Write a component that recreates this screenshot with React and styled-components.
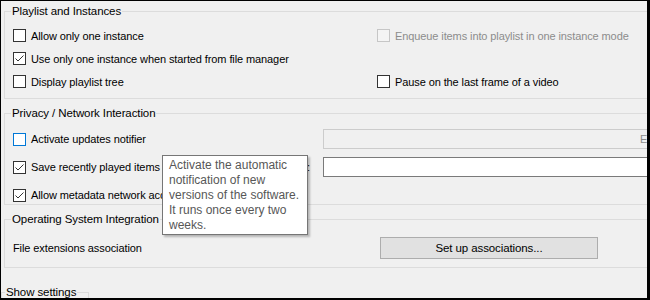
import React from 'react';
import styled, { createGlobalStyle } from 'styled-components';

const GlobalStyle = createGlobalStyle`
    html, body {
        margin: 0;
        padding: 0;
        background: #f0f0f0;
    }
    * {
        box-sizing: border-box;
    }
`

const Frame = styled.div`
    position: relative;
    width: 650px;
    height: 300px;
    background: #f0f0f0;
    border-style: solid;
    border-color: #000;
    border-width: 1px 3px 2px 1px;
    overflow: hidden;
    display: flex;
    flex-direction: column;
    font-family: 'Liberation Sans', Arial, sans-serif;
    font-size: 11px;
    letter-spacing: -0.1px;
    color: #000;
`

const Group = styled.fieldset`
    flex-shrink: 0;
    width: ${p => p.$width || 700}px;
    margin: ${p => p.$top}px 0 0 ${p => p.$left ?? 3}px;
    padding: ${p => p.$padTop}px 0 ${p => p.$padBottom}px 8px;
    border: 1px solid #dcdcdc;
    min-width: 0;
`

const Legend = styled.legend`
    padding: 0 1px;
    margin-left: ${p => p.$offset ?? -2}px;
    font-size: 11.5px;
    line-height: 14px;
    height: 14px;
`

const Grid = styled.div`
    display: grid;
    grid-template-columns: ${p => p.$col}px 1fr;
    grid-auto-rows: ${p => p.$row}px;
    row-gap: ${p => p.$gap || 0}px;
    align-items: center;
`

const Option = styled.label`
    display: flex;
    align-items: center;
    gap: 5px;
    white-space: nowrap;
    color: ${p => (p.$disabled ? '#8c8c8c' : '#000')};
`

const Box = styled.span`
    flex-shrink: 0;
    width: 13px;
    height: 13px;
    display: flex;
    align-items: center;
    justify-content: center;
    background: ${p => (p.$disabled ? '#f4f4f4' : '#fff')};
    border: 1px solid ${p => (p.$disabled ? '#c6c6c6' : p.$focus ? '#0078d7' : '#333')};
`

const Caption = styled.span`
    white-space: nowrap;
`

const SideLabel = styled.span`
    margin-left: auto;
    padding-right: 13px;
    white-space: nowrap;
`

const Field = styled.div`
    height: 20px;
    border: 1px solid ${p => (p.$disabled ? '#cccccc' : '#7a7a7a')};
    background: ${p => (p.$disabled ? '#f0f0f0' : '#fff')};
    color: #8c8c8c;
    display: flex;
    align-items: center;
    padding-left: ${p => (p.$disabled ? 316 : 3)}px;
    white-space: nowrap;
`

const Button = styled.button`
    width: 218px;
    height: 22px;
    padding: 0;
    background: #e1e1e1;
    border: 1px solid #adadad;
    font-family: inherit;
    font-size: 11.5px;
    letter-spacing: -0.1px;
    color: #000;
`

const Tooltip = styled.div`
    position: absolute;
    left: 161px;
    top: 154px;
    width: 146px;
    height: 80px;
    padding: 2px 0 0 6px;
    background: #fff;
    border: 1px solid #767676;
    box-shadow: 2px 2px 2px rgba(0, 0, 0, 0.25);
    font-family: 'Liberation Sans', Arial, sans-serif;
    font-size: 12px;
    letter-spacing: 0;
    line-height: 15px;
    color: #575757;
`

function CheckBox({ checked, disabled, focus, children }) {
    return (
        <Option $disabled={disabled}>
            <Box $disabled={disabled} $focus={focus}>
                {checked && (
                    <svg width="11" height="11" viewBox="0 0 11 11">
                        <polyline points="1.5,5.5 4,8 9.5,2.5" fill="none" stroke="#333" strokeWidth="1" />
                    </svg>
                )}
            </Box>
            {children}
        </Option>
    )
}

export default function App() {
    return (
        <>
            <GlobalStyle />
            <Frame>
                <Group $top={3} $padTop={6} $padBottom={5}>
                    <Legend>Playlist and Instances</Legend>
                    <Grid $col={364} $row={23}>
                        <CheckBox>Allow only one instance</CheckBox>
                        <CheckBox disabled>Enqueue items into playlist in one instance mode</CheckBox>
                        <CheckBox checked>Use only one instance when started from file manager</CheckBox>
                        <span />
                        <CheckBox>Display playlist tree</CheckBox>
                        <CheckBox>Pause on the last frame of a video</CheckBox>
                    </Grid>
                </Group>

                <Group $top={7} $padTop={10} $padBottom={0}>
                    <Legend>Privacy / Network Interaction</Legend>
                    <Grid $col={310} $row={18} $gap={10}>
                        <CheckBox focus>Activate updates notifier</CheckBox>
                        <Field $disabled>Every 3 days</Field>
                        <Option as="div">
                            <CheckBox checked>Save recently played items</CheckBox>
                            <SideLabel>Filter:</SideLabel>
                        </Option>
                        <Field />
                        <CheckBox checked>Allow metadata network access</CheckBox>
                        <span />
                    </Grid>
                </Group>

                <Group $top={7} $padTop={11} $padBottom={8}>
                    <Legend>Operating System Integration</Legend>
                    <Grid $col={367} $row={22}>
                        <Caption>File extensions association</Caption>
                        <Button>Set up associations...</Button>
                    </Grid>
                </Group>

                <Group $top={17} $left={0} $width={88} $padTop={4} $padBottom={4}>
                    <Legend $offset={-5}>Show settings</Legend>
                </Group>

                <Tooltip>
                    Activate the automatic<br />
                    notification of new<br />
                    versions of the software.<br />
                    It runs once every two<br />
                    weeks.
                </Tooltip>
            </Frame>
        </>
    )
}
